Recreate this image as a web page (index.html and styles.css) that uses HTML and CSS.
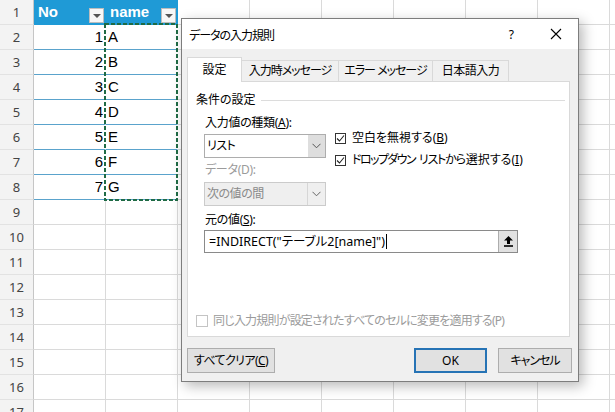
FILE: index.html
```html
<!DOCTYPE html>
<html lang="ja">
<head>
<meta charset="utf-8">
<title>データの入力規則</title>
<link rel="stylesheet" href="styles.css">
</head>
<body>
<div class="sheet">
  <div class="row"><div class="rh">1</div><div class="c th"><span>No</span><i class="fb"></i></div><div class="c th"><span>name</span><i class="fb"></i></div><div class="c"></div><div class="c"></div><div class="c"></div><div class="c"></div><div class="c"></div><div class="c"></div><div class="c"></div></div>
  <div class="row"><div class="rh">2</div><div class="c td num">1</div><div class="c td">A</div><div class="c"></div><div class="c"></div><div class="c"></div><div class="c"></div><div class="c"></div><div class="c"></div><div class="c"></div></div>
  <div class="row"><div class="rh">3</div><div class="c td num">2</div><div class="c td">B</div><div class="c"></div><div class="c"></div><div class="c"></div><div class="c"></div><div class="c"></div><div class="c"></div><div class="c"></div></div>
  <div class="row"><div class="rh">4</div><div class="c td num">3</div><div class="c td">C</div><div class="c"></div><div class="c"></div><div class="c"></div><div class="c"></div><div class="c"></div><div class="c"></div><div class="c"></div></div>
  <div class="row"><div class="rh">5</div><div class="c td num">4</div><div class="c td">D</div><div class="c"></div><div class="c"></div><div class="c"></div><div class="c"></div><div class="c"></div><div class="c"></div><div class="c"></div></div>
  <div class="row"><div class="rh">6</div><div class="c td num">5</div><div class="c td">E</div><div class="c"></div><div class="c"></div><div class="c"></div><div class="c"></div><div class="c"></div><div class="c"></div><div class="c"></div></div>
  <div class="row"><div class="rh">7</div><div class="c td num">6</div><div class="c td">F</div><div class="c"></div><div class="c"></div><div class="c"></div><div class="c"></div><div class="c"></div><div class="c"></div><div class="c"></div></div>
  <div class="row"><div class="rh">8</div><div class="c td num">7</div><div class="c td">G</div><div class="c"></div><div class="c"></div><div class="c"></div><div class="c"></div><div class="c"></div><div class="c"></div><div class="c"></div></div>
  <div class="row"><div class="rh">9</div><div class="c"></div><div class="c"></div><div class="c"></div><div class="c"></div><div class="c"></div><div class="c"></div><div class="c"></div><div class="c"></div><div class="c"></div></div>
  <div class="row"><div class="rh">10</div><div class="c"></div><div class="c"></div><div class="c"></div><div class="c"></div><div class="c"></div><div class="c"></div><div class="c"></div><div class="c"></div><div class="c"></div></div>
  <div class="row"><div class="rh">11</div><div class="c"></div><div class="c"></div><div class="c"></div><div class="c"></div><div class="c"></div><div class="c"></div><div class="c"></div><div class="c"></div><div class="c"></div></div>
  <div class="row"><div class="rh">12</div><div class="c"></div><div class="c"></div><div class="c"></div><div class="c"></div><div class="c"></div><div class="c"></div><div class="c"></div><div class="c"></div><div class="c"></div></div>
  <div class="row"><div class="rh">13</div><div class="c"></div><div class="c"></div><div class="c"></div><div class="c"></div><div class="c"></div><div class="c"></div><div class="c"></div><div class="c"></div><div class="c"></div></div>
  <div class="row"><div class="rh">14</div><div class="c"></div><div class="c"></div><div class="c"></div><div class="c"></div><div class="c"></div><div class="c"></div><div class="c"></div><div class="c"></div><div class="c"></div></div>
  <div class="row"><div class="rh">15</div><div class="c"></div><div class="c"></div><div class="c"></div><div class="c"></div><div class="c"></div><div class="c"></div><div class="c"></div><div class="c"></div><div class="c"></div></div>
  <div class="row"><div class="rh">16</div><div class="c"></div><div class="c"></div><div class="c"></div><div class="c"></div><div class="c"></div><div class="c"></div><div class="c"></div><div class="c"></div><div class="c"></div></div>
  <div class="row"><div class="rh">17</div><div class="c"></div><div class="c"></div><div class="c"></div><div class="c"></div><div class="c"></div><div class="c"></div><div class="c"></div><div class="c"></div><div class="c"></div></div>

  <svg class="ants" width="74" height="178" viewBox="0 0 74 178"><rect x="1" y="1" width="72" height="176" fill="none" stroke="#1f6b45" stroke-width="2" stroke-dasharray="4 2"/></svg>

  <div class="dlg">
    <div class="titlebar">
      <span class="ttl">データの入力規則</span>
      <span class="help">?</span>
      <svg class="close" width="12" height="12" viewBox="0 0 12 12"><path d="M1 1 L11 11 M11 1 L1 11" stroke="#000" stroke-width="1.1" fill="none"/></svg>
    </div>
    <div class="dbody">
      <div class="tabs">
        <div class="tab active">設定</div>
        <div class="tab t2">入力時メッセージ</div>
        <div class="tab t3">エラー メッセージ</div>
        <div class="tab t4">日本語入力</div>
      </div>
      <div class="panel">
        <div class="ghead"><span>条件の設定</span><i class="rule"></i></div>
        <div class="gbody">
          <div class="cols">
            <div class="lcol">
              <div class="lbl">入力値の種類(<u>A</u>):</div>
              <div class="combo"><span class="ctxt">リスト</span><span class="cbtn"><svg width="9" height="6" viewBox="0 0 9 6"><path d="M0.5 0.8 L4.5 4.8 L8.5 0.8" stroke="#555" stroke-width="1" fill="none"/></svg></span></div>
              <div class="lbl dim gap4">データ(D):</div>
              <div class="combo dis"><span class="ctxt">次の値の間</span><span class="cbtn"><svg width="9" height="6" viewBox="0 0 9 6"><path d="M0.5 0.8 L4.5 4.8 L8.5 0.8" stroke="#666" stroke-width="1" fill="none"/></svg></span></div>
            </div>
            <div class="rcol">
              <div class="chk"><span class="cb"><svg width="9" height="9" viewBox="0 0 9 9"><path d="M1 4.5 L3.5 7 L8 1.5" stroke="#222" stroke-width="1.1" fill="none"/></svg></span>空白を無視する(<u>B</u>)</div>
              <div class="chk"><span class="cb"><svg width="9" height="9" viewBox="0 0 9 9"><path d="M1 4.5 L3.5 7 L8 1.5" stroke="#222" stroke-width="1.1" fill="none"/></svg></span><span class="kana">ドロップダウン</span><span class="kana2">リストから</span>選択する(<u>I</u>)</div>
            </div>
          </div>
          <div class="lbl gap6">元の値(<u>S</u>):</div>
          <div class="src"><span class="stxt">=INDIRECT("テーブル2[name]")<i class="caret"></i></span><span class="sbtn"><svg width="9" height="11" viewBox="0 0 9 11"><path d="M4.5 0 L9 4.5 L6 4.5 L6 8 L3 8 L3 4.5 L0 4.5 Z" fill="#000"/><rect x="0" y="9.2" width="9" height="1.6" fill="#000"/></svg></span></div>
        </div>
        <div class="apply"><span class="cb off"></span>同じ入力規則が設定されたすべてのセルに変更を適用する(P)</div>
      </div>
      <div class="footer">
        <div class="btn clear">すべてクリア(<u>C</u>)</div>
        <div class="btn ok">OK</div>
        <div class="btn cancel">キャンセル</div>
      </div>
    </div>
  </div>
</div>
</body>
</html>
```
FILE: styles.css
```css
html, body {
  margin: 0;
  padding: 0;
  background: #fff;
}
.sheet {
  position: relative;
  width: 615px;
  height: 412px;
  overflow: hidden;
  font-family: "Liberation Sans", "Noto Sans CJK JP", sans-serif;
}
.row {
  display: flex;
  height: 25px;
}
.rh {
  flex: none;
  width: 34px;
  height: 25px;
  box-sizing: border-box;
  border-right: 1px solid #c6c6c6;
  border-bottom: 1px solid #e2e2e2;
  background: #f3f3f3;
  color: #444;
  font-family: "Noto Sans", "Liberation Sans", sans-serif;
  font-size: 13px;
  line-height: 24px;
  text-align: center;
}
.c {
  flex: none;
  width: 72px;
  height: 25px;
  box-sizing: border-box;
  border-right: 1px solid #dadada;
  border-bottom: 1px solid #dadada;
  font-size: 15px;
  line-height: 24px;
  color: #000;
}
.th {
  background: #1f9ad6;
  border-color: #1f9ad6;
  color: #fff;
  font-weight: bold;
  display: flex;
  align-items: flex-end;
  justify-content: space-between;
  padding-left: 4px;
}
.th span {
  align-self: center;
}
.fb {
  flex: none;
  width: 15px;
  height: 15px;
  box-sizing: border-box;
  margin: 0 1px 1px 0;
  background: #f7f7f7;
  border: 1px solid #bdbdbd;
  position: relative;
}
.fb::after {
  content: "";
  position: absolute;
  left: 3px;
  top: 5px;
  border-left: 4px solid transparent;
  border-right: 4px solid transparent;
  border-top: 4px solid #555;
}
.td {
  border-bottom-color: #5aa3cc;
  border-right-color: #fff;
  padding: 0 2px;
}
.num {
  text-align: right;
}
.ants {
  position: absolute;
  display: block;
  left: 104px;
  top: 23px;
  width: 74px;
  height: 178px;
  z-index: 1;
}

/* dialog */
.dlg {
  position: absolute;
  z-index: 2;
  left: 181px;
  top: 18px;
  width: 398px;
  height: 364px;
  box-sizing: border-box;
  border: 1px solid #7d7d7d;
  background: #f0f0f0;
  box-shadow: 4px 4px 12px rgba(0, 0, 0, 0.28);
  font-family: "Noto Sans", "Noto Sans CJK JP", sans-serif;
  font-feature-settings: "palt";
  font-size: 12px;
  color: #000;
}
.titlebar {
  height: 30px;
  background: #fff;
  display: flex;
  align-items: center;
  padding-left: 7px;
  padding-right: 16px;
}
.ttl {
  flex: 1;
  padding-top: 1px;
  letter-spacing: -1px;
}
.help {
  font-size: 12px;
  margin-right: 36px;
}
.close {
  display: block;
}
.dbody {
  padding: 8px 6px 0 5px;
}
.tabs {
  display: flex;
  align-items: flex-end;
  height: 24px;
  position: relative;
  z-index: 1;
}
.tab {
  box-sizing: border-box;
  height: 21px;
  border: 1px solid #d9d9d9;
  border-left: none;
  border-bottom: none;
  background: #f0f0f0;
  text-align: center;
  line-height: 20px;
  letter-spacing: -1px;
}
.tab.active {
  width: 55px;
  height: 25px;
  margin-bottom: -1px;
  background: #fff;
  border-left: 1px solid #d9d9d9;
  line-height: 24px;
  letter-spacing: 0;
}
.t2 { width: 97px; }
.t3 { width: 94px; }
.t4 { width: 76px; letter-spacing: -0.5px; }
.panel {
  width: 383px;
  height: 256px;
  box-sizing: border-box;
  border: 1px solid #d9d9d9;
  background: #fff;
  padding-top: 10px;
}
.ghead {
  display: flex;
  align-items: center;
  height: 16px;
  line-height: 16px;
  padding: 0 4px 0 8px;
}
.rule {
  flex: 1;
  height: 1px;
  background: #dcdcdc;
  margin-left: 5px;
}
.gbody {
  padding-left: 16px;
}
.cols {
  display: flex;
}
.lcol {
  width: 122px;
}
.rcol {
  margin-left: 9px;
  padding-top: 22px;
}
.lbl {
  height: 16px;
  line-height: 16px;
  margin-top: 7px;
  padding-left: 1px;
  letter-spacing: -0.3px;
}
.gap4 { margin-top: 4px; }
.gap6 { margin-top: 6px; }
.dim { color: #9b9b9b; }
.combo {
  margin-top: 3px;
  width: 122px;
  height: 24px;
  box-sizing: border-box;
  border: 1px solid #adadad;
  background: #fff;
  display: flex;
}
.ctxt {
  flex: 1;
  padding-left: 2px;
  line-height: 22px;
  letter-spacing: -0.5px;
}
.cbtn {
  width: 17px;
  background: #dedede;
  display: flex;
  align-items: center;
  justify-content: center;
}
.combo.dis {
  margin-top: 4px;
  border-color: #cbcbcb;
  background: #efefef;
  color: #8a8a8a;
}
.combo.dis .cbtn {
  background: #efefef;
  border-left: 1px solid #d6d6d6;
}
.chk {
  display: flex;
  align-items: center;
  height: 16px;
  line-height: 16px;
  margin-bottom: 6px;
  white-space: nowrap;
}
.kana {
  letter-spacing: -1.6px;
  margin-right: 4px;
}
.kana2 {
  letter-spacing: -1.2px;
  margin-right: 1px;
}
.cb {
  flex: none;
  width: 11px;
  height: 11px;
  box-sizing: border-box;
  border: 1px solid #333;
  margin-right: 6px;
  display: flex;
  align-items: center;
  justify-content: center;
  background: #fff;
}
.cb svg { display: block; }
.src {
  margin-top: 2px;
  width: 314px;
  height: 23px;
  box-sizing: border-box;
  border: 1px solid #8a8a8a;
  background: #fff;
  display: flex;
}
.stxt {
  flex: 1;
  padding-left: 4px;
  line-height: 21px;
  font-size: 12.5px;
  display: flex;
  align-items: center;
}
.caret {
  display: inline-block;
  width: 1px;
  height: 15px;
  background: #000;
  margin-left: 1px;
}
.sbtn {
  width: 19px;
  box-sizing: border-box;
  border-left: 1px solid #adadad;
  background: #e1e1e1;
  display: flex;
  align-items: center;
  justify-content: center;
}
.apply {
  display: flex;
  align-items: center;
  height: 16px;
  line-height: 16px;
  margin: 60px 0 0 8px;
  color: #9b9b9b;
  white-space: nowrap;
  letter-spacing: -0.8px;
}
.cb.off {
  width: 12px;
  height: 12px;
  border-color: #c4c4c4;
  margin-right: 5px;
}
.footer {
  display: flex;
  margin-top: 11px;
}
.btn {
  height: 25px;
  box-sizing: border-box;
  border: 1px solid #adadad;
  background: #e1e1e1;
  text-align: center;
  line-height: 23px;
}
.clear { width: 88px; letter-spacing: -0.6px; }
.ok {
  width: 73px;
  margin-left: auto;
  border: 2px solid #2673b5;
  line-height: 21px;
}
.cancel {
  width: 74px;
  margin-left: 11px;
  letter-spacing: -1px;
}
```
